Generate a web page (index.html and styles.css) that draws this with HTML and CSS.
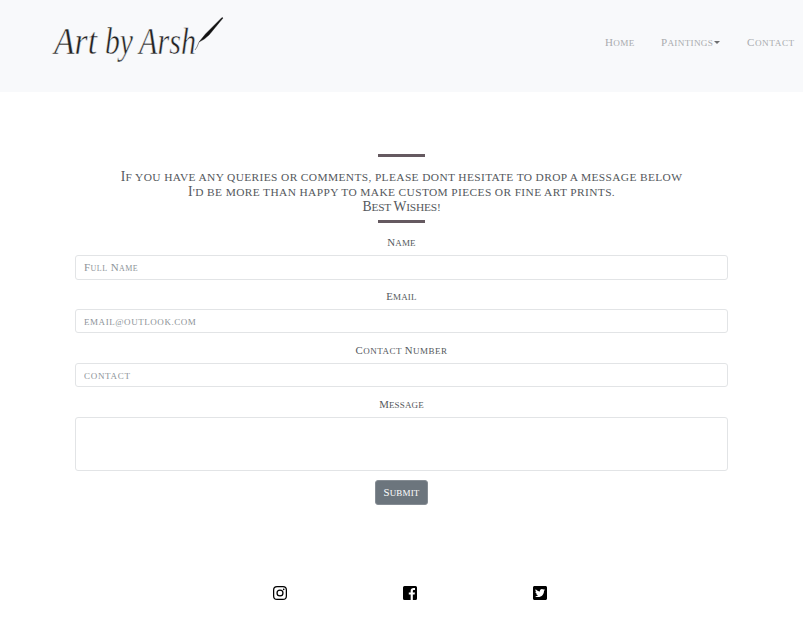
FILE: index.html
```html
<!DOCTYPE html>
<html lang="en">
<head>
<meta charset="utf-8">
<title>Art by Arsh</title>
<link rel="stylesheet" href="styles.css">
</head>
<body>
<header class="navbar">
  <a class="brand" aria-label="Art by Arsh">
    <svg width="184" height="64" viewBox="0 0 184 64">
      <text class="brand-text" x="9" y="46" textLength="43" lengthAdjust="spacingAndGlyphs">Art</text>
      <text class="brand-text" x="60" y="46" textLength="28" lengthAdjust="spacingAndGlyphs">by</text>
      <text class="brand-text" x="94" y="46" textLength="57" lengthAdjust="spacingAndGlyphs">Arsh</text>
      <path d="M150 42Q152 40 154 34" fill="none" stroke="#444" stroke-width=".6"/>
      <path d="M154 34L160.500 26L177 9.500L178 10L164 27Q159 32 154 34Z" fill="#111" stroke="#111" stroke-width=".4"/>
    </svg>
  </a>
  <nav class="links">
    <a class="home"><b>H</b>ome</a>
    <a class="paintings"><span><b>P</b>aintings</span><i class="caret"></i></a>
    <a class="contact"><b>C</b>ontact</a>
  </nav>
</header>
<main>
  <hr class="rule">
  <div class="intro">
    <p><b>I</b>f you have any queries or comments, please dont hesitate to drop a message below</p>
    <p><b>I</b>'d be more than happy to make custom pieces or fine art prints.</p>
    <p class="closing"><b>B</b>est <b>W</b>ishes!</p>
  </div>
  <hr class="rule">
  <form class="form">
    <div class="group"><label for="name"><b>N</b>ame</label><input id="name" class="mixed" type="text" placeholder="Full Name"></div>
    <div class="group"><label for="email"><b>E</b>mail</label><input id="email" type="text" placeholder="email@outlook.com"></div>
    <div class="group"><label class="long" for="phone"><b>C</b>ontact <b>N</b>umber</label><input id="phone" class="wide" type="text" placeholder="contact"></div>
    <div class="group"><label for="message"><b>M</b>essage</label><textarea id="message"></textarea></div>
    <button class="submit" type="button"><b>S</b>ubmit</button>
  </form>
</main>
<footer class="social">
  <svg viewBox="0 0 448 448"><path fill-rule="evenodd" d="M130 0H318Q448 0 448 130V318Q448 448 318 448H130Q0 448 0 318V130Q0 0 130 0ZM132 40Q40 40 40 132V316Q40 408 132 408H316Q408 408 408 316V132Q408 40 316 40Z"/><path fill-rule="evenodd" d="M224 109a115 115 0 1 0 0 230a115 115 0 1 0 0-230ZM224 149a75 75 0 1 1 0 150a75 75 0 1 1 0-150Z"/><circle cx="343" cy="105" r="27"/></svg>
  <svg viewBox="0 32 448 448"><path d="M400 32H48A48 48 0 0 0 0 80v352a48 48 0 0 0 48 48h197V304h-60v-68h60v-50c0-62 37-92 91-92 27 0 48 3 48 3v60h-31c-30 0-38 18-38 38v41h67l-11 68h-56V480H400a48 48 0 0 0 48-48V80a48 48 0 0 0-48-48z"/></svg>
  <svg viewBox="0 32 448 448"><path d="M400 32H48C21.5 32 0 53.5 0 80v352c0 26.500 21.500 48 48 48h352c26.500 0 48-21.500 48-48V80c0-26.500-21.500-48-48-48zm-48.900 158.800c.2 2.800.2 5.700.2 8.500 0 86.700-66 186.600-186.600 186.600-37.200 0-71.700-10.800-100.700-29.400 5.300.6 10.400.8 15.800.8 30.700 0 58.900-10.400 81.400-28-28.800-.6-53-19.500-61.300-45.500 10.100 1.500 19.200 1.500 29.600-1.200-30-6.100-52.500-32.500-52.500-64.400v-.8c8.700 4.900 18.900 7.900 29.600 8.300a65.447 65.447 0 0 1-29.200-54.600c0-12.200 3.200-23.400 8.900-33.100 32.300 39.800 80.800 65.800 135.200 68.600-9.300-44.500 24-80.600 64-80.600 18.900 0 35.900 7.900 47.900 20.700 14.800-2.800 29-8.300 41.600-15.800-4.900 15.200-15.200 28-28.800 36.100 13.200-1.400 26-5.100 37.800-10.200-8.900 13.100-20.100 24.700-32.900 34z"/></svg>
</footer>
</body>
</html>
```
FILE: styles.css
```css
* { box-sizing: border-box; }
body {
  margin: 0;
  background: #fff;
  color: #54585c;
  font-family: "Liberation Serif", serif;
  font-size: 9px;
  overflow: hidden;
}
b { font-size: 1.2em; font-weight: 400; line-height: 0; }
.navbar {
  display: flex;
  justify-content: space-between;
  height: 92px;
  padding: 8px 8px 0 45px;
  background: #f8f9fb;
}
.brand-text {
  font-family: "Liberation Serif", serif;
  font-size: 37px;
  font-style: italic;
  fill: #222;
  stroke: #f8f9fb;
  stroke-width: 0.5px;
}
.links {
  display: flex;
  gap: 25px;
  height: 70px;
  align-items: center;
  color: #a9abae;
  font-size: 9.2px;
  letter-spacing: 0.3px;
  text-transform: uppercase;
}
.links a { white-space: nowrap; }
.home { width: 31px; }
.paintings { display: flex; align-items: center; width: 61px; }
.contact { width: 48px; letter-spacing: 0.55px; }
.caret {
  margin: -2px 0 0 1px;
  border: 3px solid transparent;
  border-top-color: #6d6e70;
  border-bottom: 0;
}
main { padding: 62px 75px 0; text-align: center; }
.rule {
  width: 47px;
  height: 3px;
  margin: 0 auto;
  border: 0;
  background: #655960;
}
.intro {
  padding: 13px 0 5px;
  font-size: 11.4px;
  line-height: 15px;
  letter-spacing: 0.38px;
  text-transform: uppercase;
}
.intro p { height: 15px; margin: 0; white-space: nowrap; }
.intro .closing { letter-spacing: -0.2px; }
.form { padding-top: 13px; }
.group { height: 54px; }
.group label {
  display: block;
  height: 19px;
  line-height: 15px;
  letter-spacing: 0.15px;
  text-transform: uppercase;
}
.group .long { letter-spacing: 0.5px; }
.group input, .group textarea {
  display: block;
  width: 653px;
  height: 25px;
  padding: 0 8px;
  border: 1px solid #e2e4e6;
  border-radius: 3px;
  outline: 0;
  background: #fff;
  color: #495057;
  font: inherit;
  letter-spacing: 0.55px;
  text-transform: uppercase;
}
.group:nth-child(n+2) input { height: 24px; padding-top: 1px; }
.group input.mixed {
  padding-bottom: 1px;
  font-size: 11px;
  font-variant: small-caps;
  letter-spacing: 0.45px;
  text-transform: none;
}
.group input.wide { letter-spacing: 0.7px; }
.group input::placeholder { color: #8d9398; opacity: 1; }
.group textarea { height: 54px; resize: none; }
.submit {
  display: block;
  width: 53px;
  height: 25px;
  margin: 28px auto 0;
  padding: 0;
  border: 1px solid #858c93;
  border-radius: 3px;
  background: #6c757d;
  color: #fff;
  font: inherit;
  letter-spacing: 0.15px;
  text-transform: uppercase;
}
.social { display: flex; justify-content: center; gap: 116px; padding: 81px 0 0 16px; }
.social svg { width: 14px; height: 14px; }
```
